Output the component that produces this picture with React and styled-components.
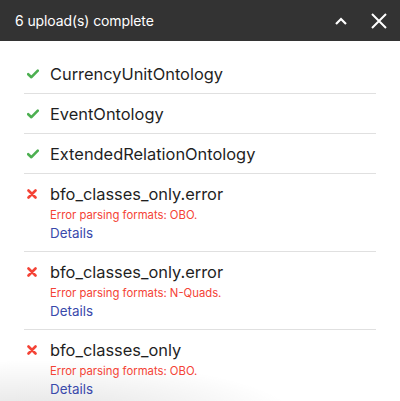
import React from "react";
import styled, { createGlobalStyle } from "styled-components";

const GlobalStyle = createGlobalStyle`
  html, body {
    margin: 0;
    padding: 0;
    height: 100%;
    font-family: Inter, "Noto Sans", sans-serif;
    background: #fff;
  }
  #root {
    min-height: 100%;
  }
`;

const Panel = styled.div`
  width: 400px;
  height: 401px;
  overflow: hidden;
  background:
    radial-gradient(ellipse 260px 60px at 40px 420px, rgba(0, 0, 0, 0.12), rgba(0, 0, 0, 0) 100%),
    #fff;
`;

const Header = styled.div`
  height: 41px;
  background: #333;
  display: flex;
  align-items: center;
  padding: 0 12px 0 15px;
  color: #fff;
`;

const Title = styled.div`
  flex: 1;
  font-size: 14px;
  letter-spacing: -0.1px;
`;

const IconButton = styled.button`
  background: none;
  border: 0;
  padding: 0;
  margin-left: ${(p) => p.$gap || 0}px;
  display: flex;
  align-items: center;
  justify-content: center;
  color: #fff;
  cursor: pointer;
`;

const List = styled.ul`
  list-style: none;
  margin: 0;
  padding: 13px 24px 0;
`;

const Row = styled.li`
  display: flex;
  align-items: flex-start;
  padding: 10px 0 9px;
  border-bottom: 1px solid #e0e0e0;
  &:last-child {
    border-bottom: 0;
  }
`;

const StatusIcon = styled.div`
  width: 26px;
  height: 20px;
  display: flex;
  align-items: center;
  padding-left: 3px;
  box-sizing: border-box;
`;

const Body = styled.div`
  display: flex;
  flex-direction: column;
`;

const Name = styled.div`
  font-size: 16.4px;
  line-height: 20px;
  color: #1f1f1f;
`;

const ErrorText = styled.div`
  font-size: 11.3px;
  line-height: 14px;
  margin-top: 4px;
  color: #f44336;
`;

const DetailsLink = styled.a`
  font-size: 13.4px;
  line-height: 18px;
  margin-top: 2px;
  color: #3949ab;
  text-decoration: none;
`;

const Check = () => (
  <svg width="12" height="10" viewBox="0 0 12 10">
    <path d="M1.2 5.2 L4.4 8.2 L10.8 1.6" fill="none" stroke="#4caf50" strokeWidth="2.6" strokeLinecap="round" strokeLinejoin="round" />
  </svg>
);

const Cross = () => (
  <svg width="10" height="10" viewBox="0 0 10 10">
    <path d="M1.5 1.5 L8.5 8.5 M8.5 1.5 L1.5 8.5" fill="none" stroke="#f44336" strokeWidth="2.6" strokeLinecap="round" />
  </svg>
);

const uploads = [
  { name: "CurrencyUnitOntology", ok: true },
  { name: "EventOntology", ok: true },
  { name: "ExtendedRelationOntology", ok: true },
  { name: "bfo_classes_only.error", error: "Error parsing formats: OBO." },
  { name: "bfo_classes_only.error", error: "Error parsing formats: N-Quads." },
  { name: "bfo_classes_only", error: "Error parsing formats: OBO." },
];

export default function App() {
  return (
    <Panel>
      <GlobalStyle />
      <Header>
        <Title>6 upload(s) complete</Title>
        <IconButton aria-label="collapse">
          <svg width="14" height="10" viewBox="0 0 14 10">
            <path d="M2 8 L7 3 L12 8" fill="none" stroke="#fff" strokeWidth="2.2" />
          </svg>
        </IconButton>
        <IconButton aria-label="close" $gap={22}>
          <svg width="18" height="18" viewBox="0 0 18 18">
            <path d="M2 2 L16 16 M16 2 L2 16" fill="none" stroke="#fff" strokeWidth="2" />
          </svg>
        </IconButton>
      </Header>
      <List>
        {uploads.map((u, i) => (
          <Row key={i}>
            <StatusIcon>{u.ok ? <Check /> : <Cross />}</StatusIcon>
            <Body>
              <Name>{u.name}</Name>
              {u.error && <ErrorText>{u.error}</ErrorText>}
              {u.error && <DetailsLink href="#">Details</DetailsLink>}
            </Body>
          </Row>
        ))}
      </List>
    </Panel>
  );
}
